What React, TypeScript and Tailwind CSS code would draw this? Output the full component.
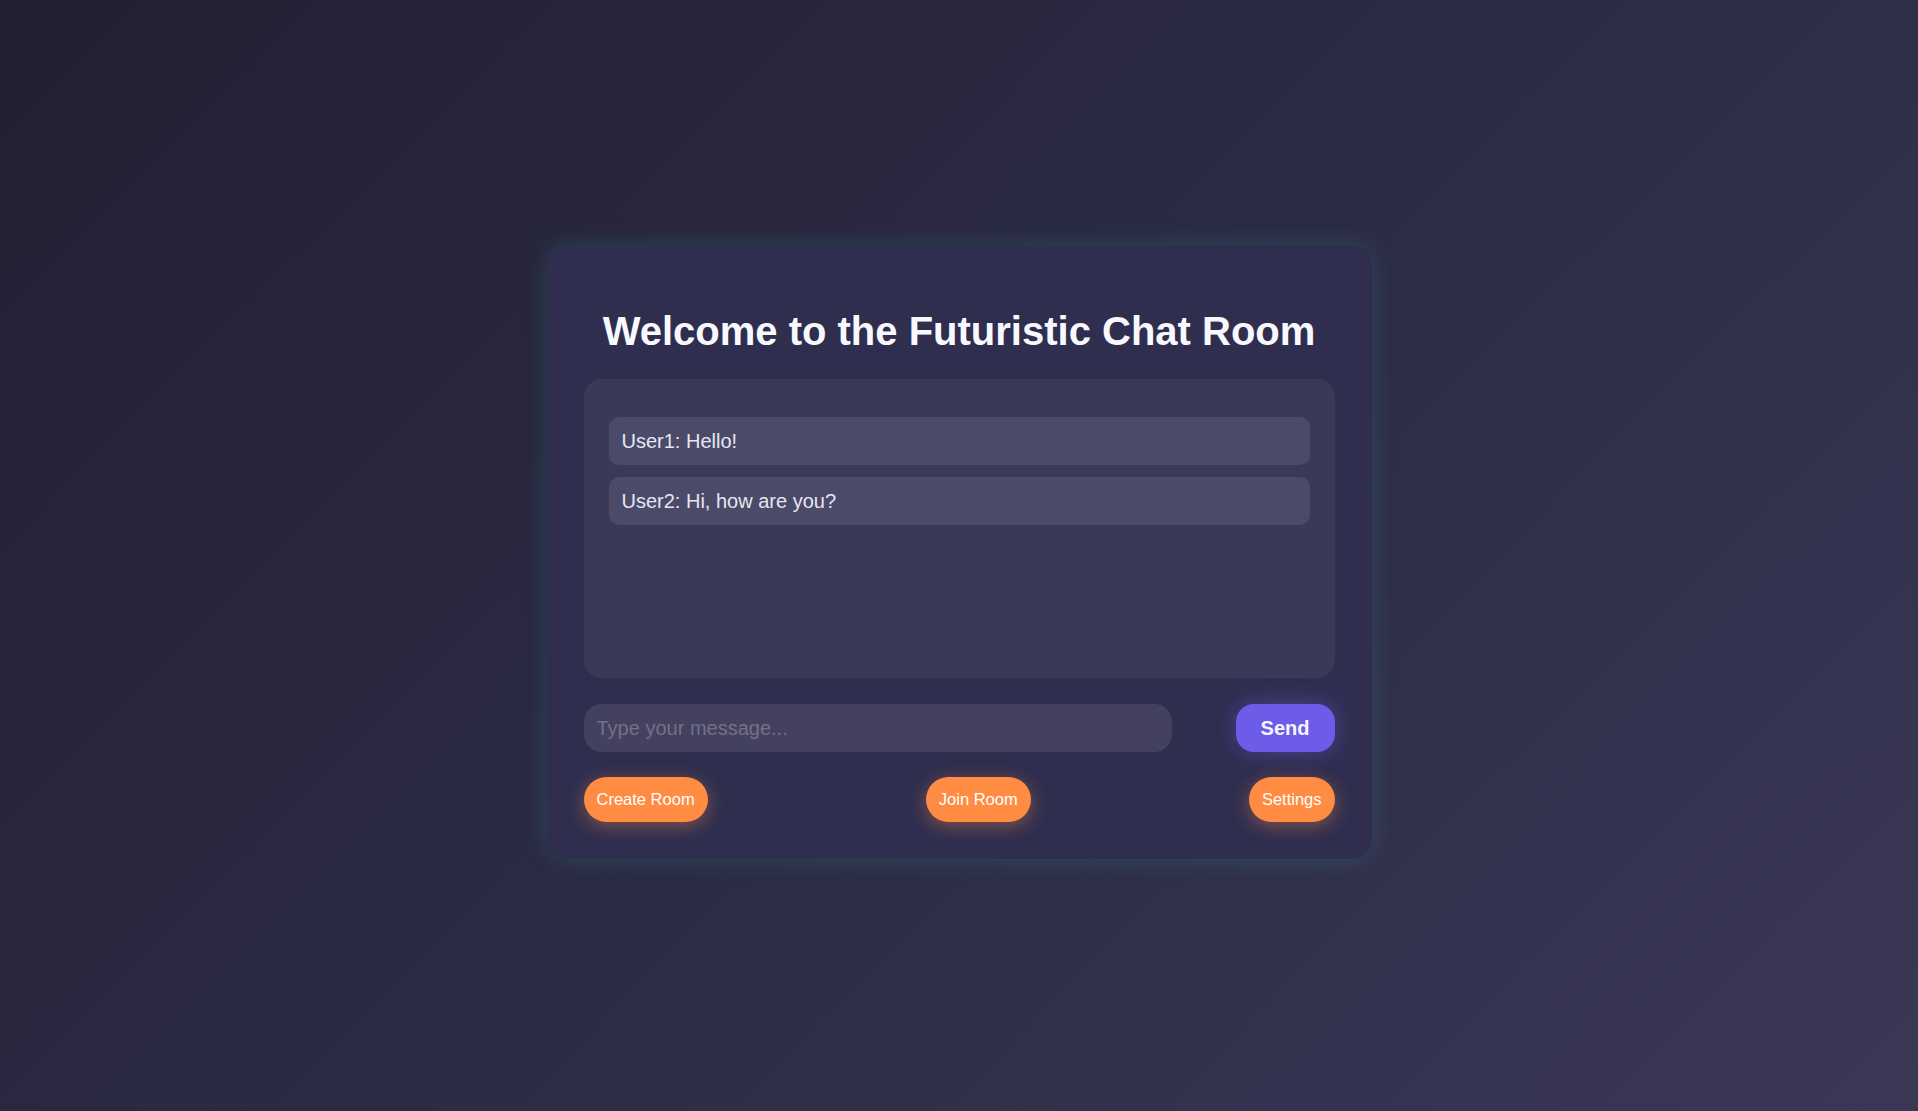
export default function App() {
  const messages = ['User1: Hello!', 'User2: Hi, how are you?'];

  return (
    <div className="flex min-h-screen w-full items-start justify-center bg-[linear-gradient(135deg,#212032_0%,#2c2b45_50%,#3a3855_100%)] pt-[245px] font-['Liberation_Sans',Arial,sans-serif]">
      <div className="flex w-[825px] flex-col rounded-[20px] bg-[#2f2e4f] px-[37px] pt-[63px] pb-[37px] shadow-[0_0_22px_rgba(60,200,180,0.18)]">
        <h1 className="text-center text-[40px] leading-[46px] font-bold text-[#f8f9ff]">
          Welcome to the Futuristic Chat Room
        </h1>

        <div className="mt-[25px] flex h-[299px] flex-col gap-[12px] rounded-[18px] bg-[#3a3957] px-[25px] pt-[38px]">
          {messages.map((msg) => (
            <div
              key={msg}
              className="flex h-[48px] items-center rounded-[10px] bg-[#4b4a69] px-[13px] text-[20px] text-[#e6e6f2]"
            >
              {msg}
            </div>
          ))}
        </div>

        <div className="mt-[26px] flex items-center justify-between">
          <input
            type="text"
            placeholder="Type your message..."
            className="h-[48px] w-[588px] rounded-[18px] bg-[#43415f] px-[13px] text-[20px] text-[#e6e6f2] outline-none placeholder:text-[#737184]"
          />
          <button className="h-[48px] w-[99px] rounded-[18px] bg-[#6c5ce7] text-[20px] font-bold text-[#f5f5ff] shadow-[0_0_22px_rgba(108,92,231,0.45)]">
            Send
          </button>
        </div>

        <div className="mt-[25px] flex items-center justify-between">
          {['Create Room', 'Join Room', 'Settings'].map((label) => (
            <button
              key={label}
              className="h-[45px] rounded-full bg-[#ff8c42] px-[13px] text-[16.5px] text-white shadow-[0_4px_18px_rgba(255,140,66,0.4)]"
            >
              {label}
            </button>
          ))}
        </div>
      </div>
    </div>
  );
}
